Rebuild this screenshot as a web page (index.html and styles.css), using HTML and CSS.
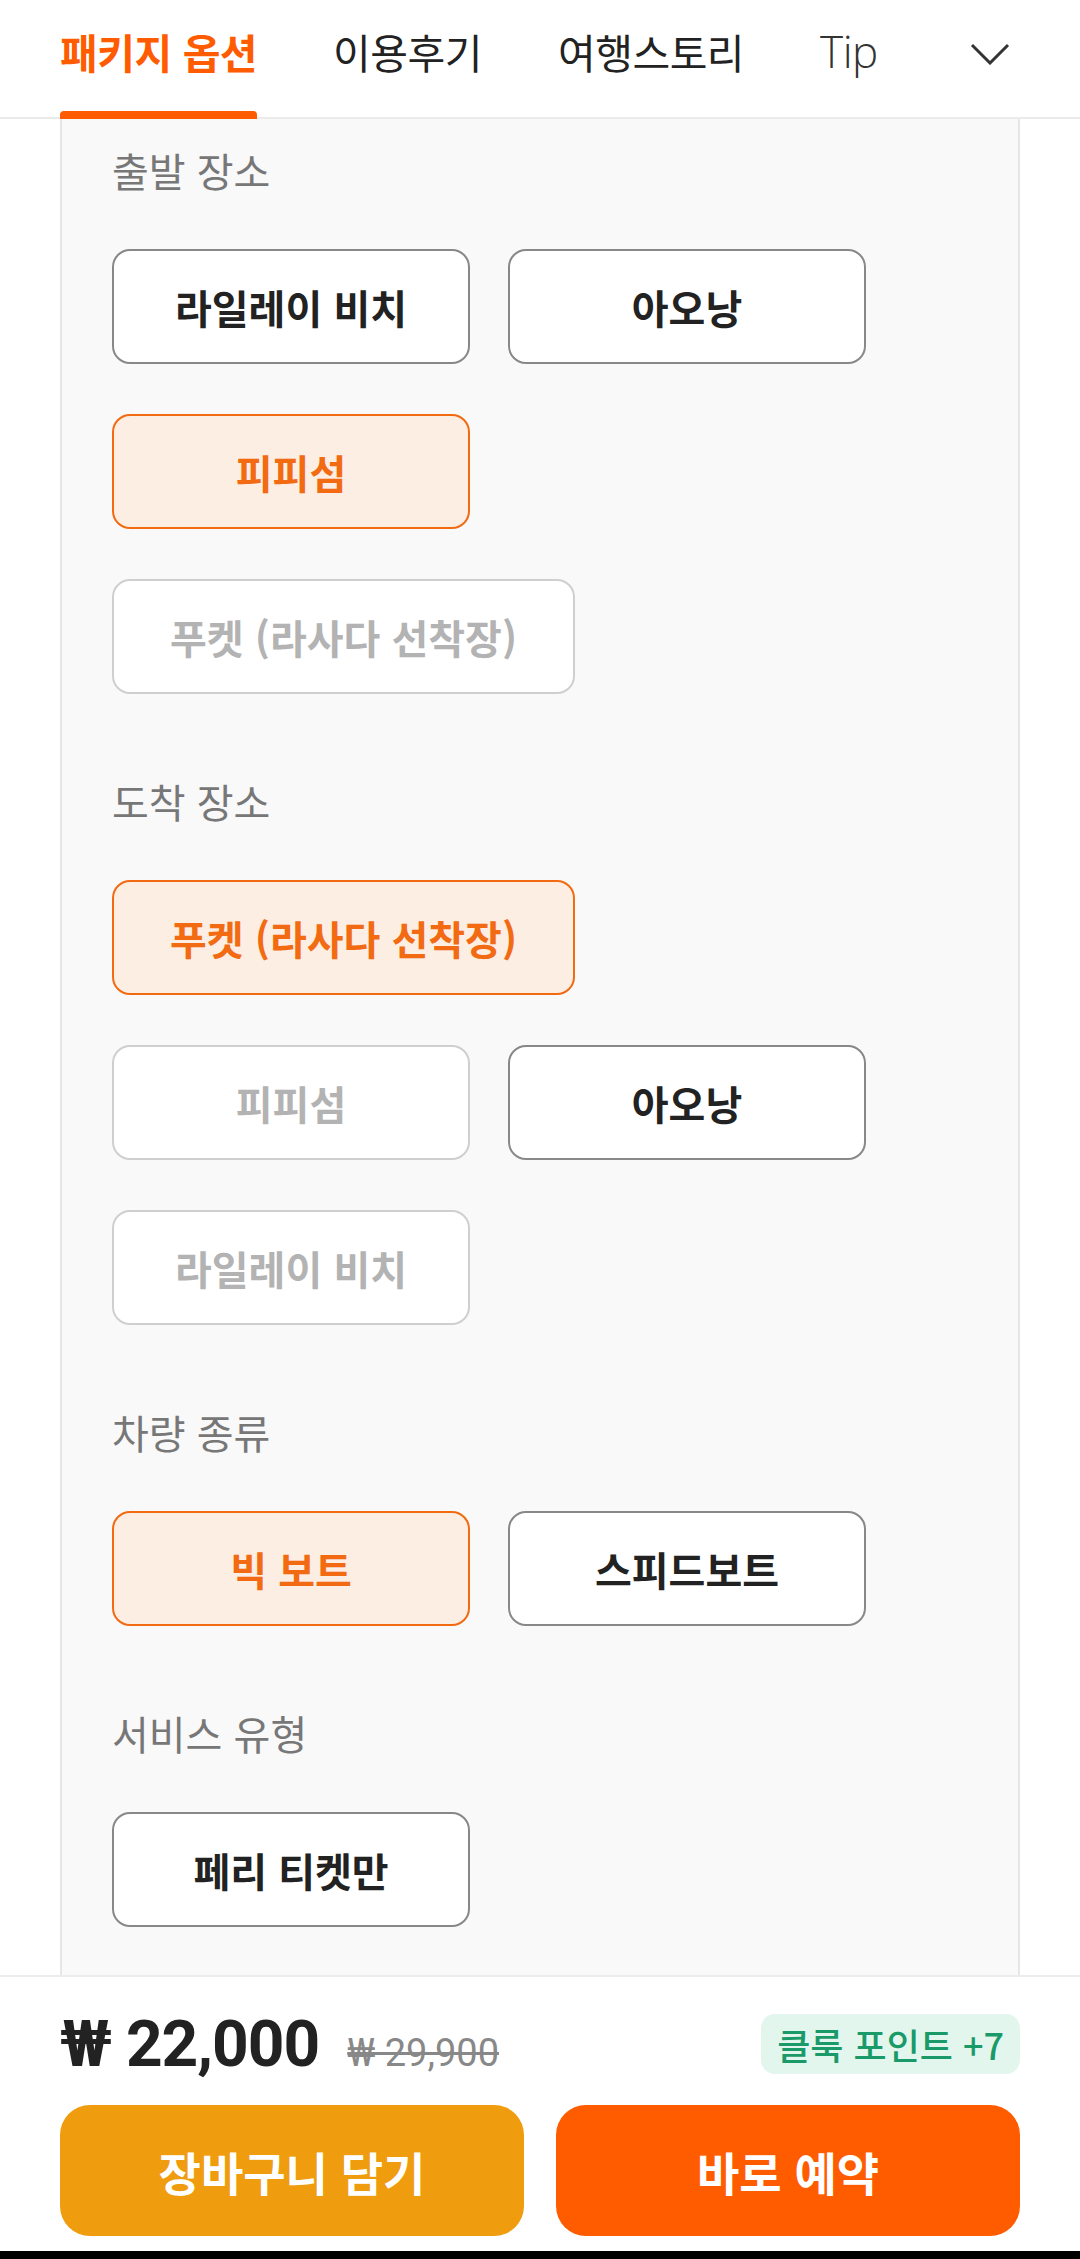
FILE: index.html
```html
<!DOCTYPE html>
<html lang="ko">
<head>
  <meta charset="UTF-8">
  <meta name="viewport" content="width=device-width, initial-scale=1.0">
  <title>패키지 옵션</title>
  <link rel="stylesheet" href="styles.css">
</head>
<body>
  <!-- Tab bar -->
  <header class="tabs">
    <nav class="tab-list">
      <span class="tab active">패키지 옵션</span>
      <span class="tab">이용후기</span>
      <span class="tab">여행스토리</span>
      <span class="tab tip">Tip</span>
    </nav>
    <svg class="chevron" viewBox="0 0 40 22" width="40" height="22">
      <path d="M2 2 L20 20 L38 2" fill="none" stroke="#333" stroke-width="3"/>
    </svg>
  </header>

  <!-- Option panel -->
  <main class="content">
    <div class="panel">
      <section class="group">
        <div class="group-title">출발 장소</div>
        <div class="options">
          <button class="opt">라일레이 비치</button>
          <button class="opt">아오낭</button>
          <button class="opt selected">피피섬</button>
          <button class="opt disabled">푸켓 (라사다 선착장)</button>
        </div>
      </section>

      <section class="group">
        <div class="group-title">도착 장소</div>
        <div class="options">
          <button class="opt selected">푸켓 (라사다 선착장)</button>
          <button class="opt disabled">피피섬</button>
          <button class="opt">아오낭</button>
          <button class="opt disabled">라일레이 비치</button>
        </div>
      </section>

      <section class="group">
        <div class="group-title">차량 종류</div>
        <div class="options">
          <button class="opt selected">빅 보트</button>
          <button class="opt">스피드보트</button>
        </div>
      </section>

      <section class="group">
        <div class="group-title">서비스 유형</div>
        <div class="options">
          <button class="opt">페리 티켓만</button>
        </div>
      </section>
    </div>
  </main>

  <!-- Bottom bar -->
  <footer class="footer">
    <div class="price-row">
      <div class="prices">
        <span class="price">₩ 22,000</span>
        <span class="old-price">₩ 29,900</span>
      </div>
      <span class="points">클룩 포인트 +7</span>
    </div>
    <div class="actions">
      <button class="btn cart">장바구니 담기</button>
      <button class="btn book">바로 예약</button>
    </div>
  </footer>
  <div class="nav-bar"></div>
</body>
</html>
```

FILE: styles.css
```css
body {
  margin: 0;
  height: 2259px;
  display: flex;
  flex-direction: column;
  overflow: hidden;
  background: #fff;
  font-family: "Noto Sans CJK KR", "Noto Sans", sans-serif;
  color: #222;
}

/* Tabs */
.tabs {
  height: 117px;
  flex-shrink: 0;
  display: flex;
  align-items: stretch;
  justify-content: space-between;
  padding: 0 70px 0 60px;
  border-bottom: 2px solid #ebebeb;
}

.tab-list {
  display: flex;
  gap: 76px;
}

.tab {
  position: relative;
  display: flex;
  align-items: center;
  padding-bottom: 16px;
  font-size: 41px;
  color: #222;
  letter-spacing: -0.5px;
}

.tab.tip {
  font-family: "Open Sans", sans-serif;
  font-weight: 300;
  font-size: 44px;
  color: #333;
}

.tab.active {
  color: #ff5b00;
  font-weight: 700;
}

.tab.active::after {
  content: "";
  position: absolute;
  left: 0;
  right: 0;
  bottom: -2px;
  height: 8px;
  border-radius: 4px 4px 0 0;
  background: #ff5b00;
}

.chevron {
  align-self: center;
  margin-bottom: 10px;
}

/* Content */
.content {
  flex: 1;
  overflow: hidden;
}

.panel {
  margin: 0 60px;
  min-height: 100%;
  background: #f9f9f9;
  border-left: 2px solid #e6e6e6;
  border-right: 2px solid #e6e6e6;
  padding: 26px 70px 0 50px;
}

.group {
  margin-bottom: 82px;
}

.group-title {
  height: 50px;
  line-height: 50px;
  font-size: 40px;
  color: #777;
  margin-bottom: 54px;
}

.options {
  display: flex;
  flex-wrap: wrap;
  column-gap: 38px;
  row-gap: 50px;
}

.opt {
  box-sizing: border-box;
  min-width: 358px;
  height: 115px;
  padding: 0 56px;
  background: #fff;
  border: 2px solid #888;
  border-radius: 18px;
  font-family: inherit;
  font-size: 40px;
  font-weight: 700;
  color: #222;
}

.opt.selected {
  background: #fdeee3;
  border-color: #f26a12;
  color: #f26a12;
}

.opt.disabled {
  border-color: #cfcfcf;
  color: #b3b3b3;
}

/* Footer */
.footer {
  flex-shrink: 0;
  height: 276px;
  box-sizing: border-box;
  border-top: 2px solid #ececec;
  padding: 35px 60px 0;
}

.price-row {
  display: flex;
  justify-content: space-between;
  align-items: center;
  height: 64px;
}

.prices {
  display: flex;
  align-items: baseline;
  gap: 28px;
}

.price {
  font-family: Roboto, "Noto Sans CJK KR", sans-serif;
  font-size: 64px;
  font-weight: 700;
  color: #222;
  letter-spacing: -1px;
}

.old-price {
  font-family: Roboto, "Noto Sans CJK KR", sans-serif;
  font-size: 38px;
  color: #888;
  text-decoration: line-through;
}

.points {
  background: #e3f6ee;
  color: #1a9a68;
  font-size: 36px;
  font-weight: 500;
  line-height: 52px;
  padding: 4px 16px;
  border-radius: 14px;
}

.actions {
  display: flex;
  gap: 32px;
  margin-top: 29px;
}

.btn {
  flex: 1;
  height: 131px;
  border: none;
  border-radius: 30px;
  font-family: inherit;
  font-size: 46px;
  font-weight: 700;
  color: #fff;
}

.btn.cart {
  background: #ef9c0e;
}

.btn.book {
  background: #ff5c00;
}

.nav-bar {
  height: 8px;
  flex-shrink: 0;
  background: #000;
}
```
